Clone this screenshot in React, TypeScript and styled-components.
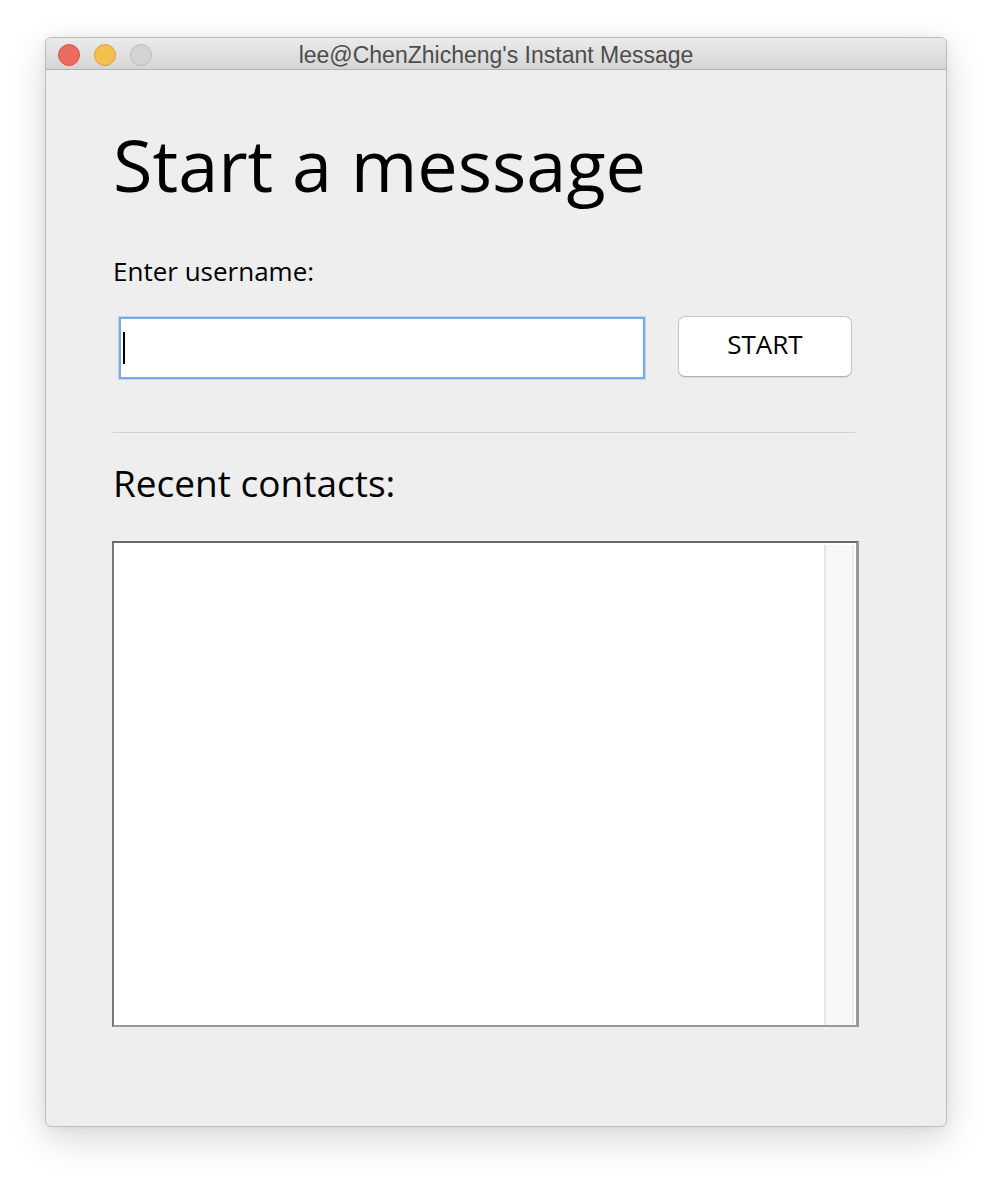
import React from "react";
import styled, { createGlobalStyle } from "styled-components";

const Global = createGlobalStyle`
  html, body { margin: 0; padding: 0; background: #ffffff; }
  body { font-family: "Open Sans", "DejaVu Sans", sans-serif; }
  * { box-sizing: border-box; }
`;

const Page = styled.div`
  padding: 37px 0 0 45px;
  width: 992px;
  height: 1180px;
`;

const Window = styled.div`
  width: 902px;
  height: 1090px;
  display: flex;
  flex-direction: column;
  background: #eeeeee;
  border: 1px solid #bcbcbc;
  border-radius: 6px;
  box-shadow: 0 12px 36px rgba(0, 0, 0, 0.16), 0 0 10px rgba(0, 0, 0, 0.06);
  overflow: hidden;
`;

const TitleBar = styled.div`
  height: 32px;
  flex: none;
  display: grid;
  grid-template-columns: 1fr auto 1fr;
  align-items: center;
  background: linear-gradient(#ebebeb, #d5d5d5);
  border-bottom: 1px solid #b3b3b3;
  padding: 0 12px;
`;

const Lights = styled.div`
  display: flex;
  gap: 14px;
  align-items: center;
`;

const Light = styled.span<{ $fill: string; $edge: string }>`
  width: 22px;
  height: 22px;
  border-radius: 50%;
  background: ${(p) => p.$fill};
  border: 1px solid ${(p) => p.$edge};
`;

const Title = styled.div`
  font-family: "Liberation Sans", Arial, sans-serif;
  font-size: 23px;
  color: #4d4d4d;
  white-space: nowrap;
  line-height: 31px;
  padding-top: 2px;
`;

const Content = styled.div`
  flex: 1;
  display: flex;
  flex-direction: column;
  padding: 45px 88px 0 67px;
  color: #000;
`;

const Heading = styled.h1`
  margin: 0;
  font-family: "Open Sans", sans-serif;
  font-weight: 400;
  font-size: 72px;
  line-height: 1.362;
`;

const Label = styled.div<{ $size: number; $top: number }>`
  margin-top: ${(p) => p.$top}px;
  font-size: ${(p) => p.$size}px;
  line-height: 1.362;
`;

const InputRow = styled.div`
  margin-top: 27px;
  display: flex;
  align-items: flex-start;
  gap: 33px;
  padding: 0 6px;
`;

const Field = styled.div`
  flex: 1;
  height: 62px;
  margin-top: 1px;
  background: #ffffff;
  border: 2px solid #79abea;
  box-shadow: 0 0 0 1px rgba(130, 180, 240, 0.45);
  display: flex;
  align-items: center;
  padding-left: 2px;
`;

const Caret = styled.span`
  width: 2px;
  height: 32px;
  background: #000;
`;

const Button = styled.button`
  width: 174px;
  height: 61px;
  flex: none;
  background: #ffffff;
  border: 1px solid #c6c6c6;
  border-bottom-color: #b0b0b0;
  border-radius: 7px;
  box-shadow: 0 1px 1px rgba(0, 0, 0, 0.08);
  font-family: "Open Sans", sans-serif;
  font-size: 26px;
  color: #000;
  padding: 0 0 5px 0;
`;

const Separator = styled.hr`
  margin: 53px 3px 0 0;
  border: none;
  height: 1px;
  background: #d2d2d2;
`;

const ListBox = styled.div`
  margin: 32px -1px 0 -1px;
  height: 486px;
  background: #ffffff;
  border-top: 2px solid #6a6a6a;
  border-left: 2px solid #777777;
  border-right: 3px solid #989898;
  border-bottom: 2px solid #999999;
  display: flex;
  justify-content: flex-end;
  padding: 2px 2px 0 0;
`;

const ScrollTrack = styled.div`
  width: 30px;
  background: #f8f8f8;
  border-left: 2px solid #e6e6e6;
  border-right: 2px solid #ebebeb;
`;

export default function App() {
  return (
    <Page>
      <Global />
      <Window>
        <TitleBar>
          <Lights>
            <Light $fill="#ed6a5e" $edge="#d65247" />
            <Light $fill="#f5bf4f" $edge="#d9a23a" />
            <Light $fill="#d3d3d3" $edge="#bdbdbd" />
          </Lights>
          <Title>lee@ChenZhicheng's Instant Message</Title>
          <div />
        </TitleBar>
        <Content>
          <Heading>Start a message</Heading>
          <Label $size={26} $top={41}>Enter username:</Label>
          <InputRow>
            <Field>
              <Caret />
            </Field>
            <Button>START</Button>
          </InputRow>
          <Separator />
          <Label $size={37} $top={25}>Recent contacts:</Label>
          <ListBox>
            <ScrollTrack />
          </ListBox>
        </Content>
      </Window>
    </Page>
  );
}
